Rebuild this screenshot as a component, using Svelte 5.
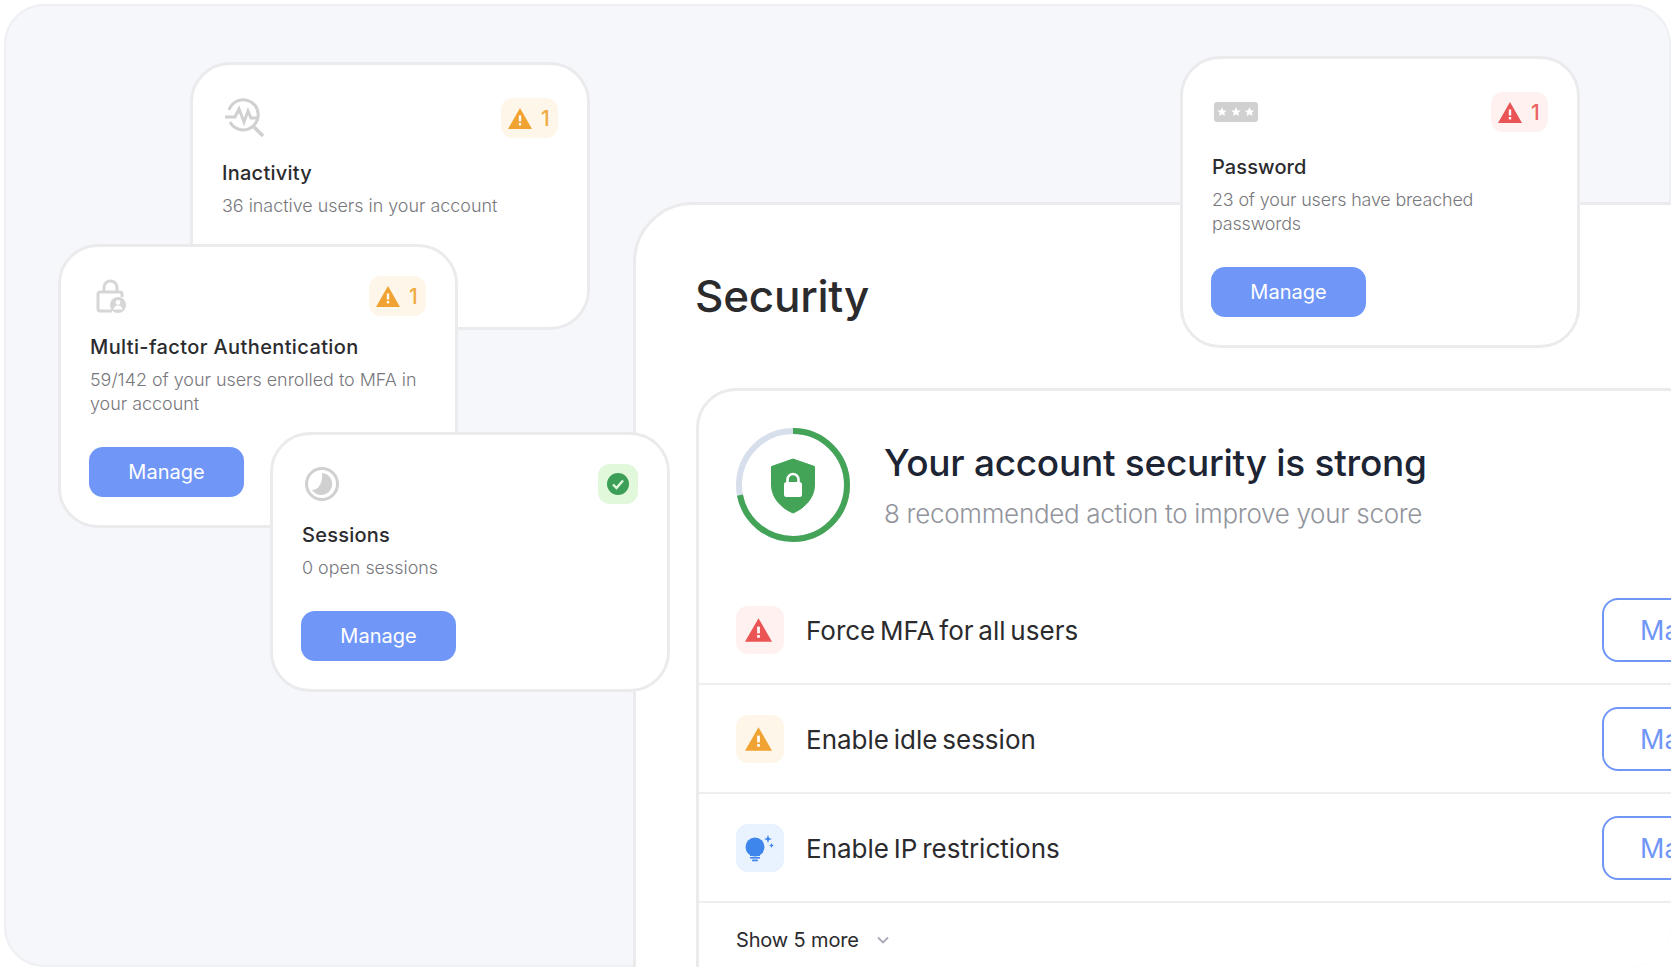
<script>
  const rows = [
    { label: "Force MFA for all users", tone: "red" },
    { label: "Enable idle session", tone: "orange" },
    { label: "Enable IP restrictions", tone: "blue" }
  ]
  const stars = [8, 22, 35.5]
</script>

{#snippet triangle()}
  <svg class="tri" viewBox="0 0 24 21">
    <path d="M12 0 24 21H0Z" fill="currentColor" />
    <rect x="10.8" y="7.5" width="2.4" height="6" fill="#fff" />
    <rect x="10.8" y="15" width="2.4" height="2.4" fill="#fff" />
  </svg>
{/snippet}

{#snippet manage()}
  <button class="primary">Manage</button>
{/snippet}

<div class="frame">
  <section class="panel">
    <h1>Security</h1>
    <div class="score">
      <div class="score-head">
        <svg class="ring" viewBox="0 0 114 114">
          <circle cx="57" cy="58" r="54" fill="none" stroke="#d6dfeb" stroke-width="6" />
          <circle cx="57" cy="58" r="54" fill="none" stroke="#43a356" stroke-width="6" pathLength="100" stroke-dasharray="72 28" transform="rotate(-90 57 58)" />
          <path d="M57 32 78.500 39.500V58C78.500 72 67 82 57 86 47 82 35.500 72 35.500 58V39.500Z" fill="#43a356" stroke="#43a356" stroke-width="1" stroke-linejoin="round" />
          <path d="M51.500 56V52.500A5.500 5.500 0 0 1 62.500 52.500V56" fill="none" stroke="#fff" stroke-width="2.600" />
          <rect x="48" y="55" width="18" height="15" rx="2.500" fill="#fff" />
        </svg>
        <div class="score-text">
          <h2>Your account security is strong</h2>
          <p>8 recommended action to improve your score</p>
        </div>
      </div>
      {#each rows as row}
        <div class="row">
          <span class="tile {row.tone}">
            {#if row.tone === "blue"}
              <svg class="bulb" viewBox="0 0 30 30">
                <circle cx="10" cy="15" r="9.500" fill="currentColor" />
                <path d="M5 21H15V24H5Z" fill="currentColor" />
                <rect x="5" y="25" width="10" height="1.600" fill="currentColor" />
                <rect x="7" y="27.500" width="6" height="1.800" rx="0.900" fill="currentColor" />
                <path d="M23 3 24.100 6 27 7 24.100 8 23 11 21.900 8 19 7 21.900 6Z" fill="currentColor" />
                <path d="M26.500 11 27.300 12.700 29 13.500 27.300 14.300 26.500 16 25.700 14.300 24 13.500 25.700 12.700Z" fill="currentColor" />
              </svg>
            {:else}
              {@render triangle()}
            {/if}
          </span>
          <span class="row-label">{row.label}</span>
          <button class="outline">Manage</button>
        </div>
      {/each}
      <div class="more">
        Show 5 more
        <svg viewBox="0 0 12 8"><path d="M1 1.500 6 6.500 11 1.500" fill="none" stroke="currentColor" stroke-width="1.800" /></svg>
      </div>
    </div>
  </section>

  <article class="card inactivity">
    <div class="card-head">
      <svg class="glyph shifted" viewBox="0 0 40 40">
        <path d="M4 12A15 15 0 1 1 5 24" fill="none" stroke="#d0d0d0" stroke-width="3" />
        <path d="M29 29 38 38" stroke="#d0d0d0" stroke-width="3.500" />
        <path d="M0 19H10L14 11 19 24 23 13 26 20H32" fill="none" stroke="#d0d0d0" stroke-width="3" />
      </svg>
      <span class="badge orange">{@render triangle()}<b>1</b></span>
    </div>
    <h3>Inactivity</h3>
    <p>36 inactive users in your account</p>
  </article>

  <article class="card mfa">
    <div class="card-head">
      <svg class="glyph" viewBox="0 0 40 40">
        <path d="M14 16V11.500A6.500 6.500 0 0 1 27 11.500V16" fill="none" stroke="#d6d6d6" stroke-width="3" />
        <path d="M22 35H10Q8 35 8 33V18Q8 16 10 16H30Q32 16 32 18V21" fill="none" stroke="#d6d6d6" stroke-width="3" />
        <circle cx="28" cy="29" r="8" fill="#d6d6d6" />
        <circle cx="28" cy="26.500" r="2.400" fill="#fff" />
        <path d="M23.500 33.500A4.500 4 0 0 1 32.500 33.500Z" fill="#fff" />
      </svg>
      <span class="badge orange">{@render triangle()}<b>1</b></span>
    </div>
    <h3>Multi-factor Authentication</h3>
    <p>59/142 of your users enrolled to MFA in your account</p>
    {@render manage()}
  </article>

  <article class="card sessions">
    <div class="card-head">
      <svg class="glyph" viewBox="0 0 40 40">
        <circle cx="20" cy="20" r="15.500" fill="none" stroke="#d0d0d0" stroke-width="3" />
        <path d="M20 9A11 11 0 1 1 10 26C16 26 21 20 20 9Z" fill="#d0d0d0" />
      </svg>
      <span class="badge green">
        <svg class="check" viewBox="0 0 22 22">
          <circle cx="11" cy="11" r="11" fill="#3d9f57" />
          <path d="M6 11.500 9.500 15 16 7.500" fill="none" stroke="#e1f8db" stroke-width="2.400" />
        </svg>
      </span>
    </div>
    <h3>Sessions</h3>
    <p>0 open sessions</p>
    {@render manage()}
  </article>

  <article class="card password">
    <div class="card-head">
      <svg class="stars" viewBox="0 0 44 20">
        <rect width="44" height="20" rx="3" fill="#d0d0d0" />
        {#each stars as x}
          <path d="M0-5 1.400-1.600 4.800-1.500 2.200 .7 3 4 0 2.200-3 4-2.200 .7-4.800-1.500-1.400-1.600Z" fill="#fff" transform="translate({x} 10)" />
        {/each}
      </svg>
      <span class="badge red">{@render triangle()}<b>1</b></span>
    </div>
    <h3>Password</h3>
    <p>23 of your users have breached<br />passwords</p>
    {@render manage()}
  </article>
</div>

<style>
  :global(body) {
    background: #fff;
  }
  .frame {
    position: relative;
    width: 1667px;
    height: 963px;
    margin: 4px 0 0 4px;
    overflow: hidden;
    border-radius: 40px;
    background: #f6f7fb;
    box-shadow: inset 0 0 0 2px #eef0f4;
    font-family: Inter, "Liberation Sans", sans-serif;
    color: #2b2b2e;
  }

  .panel {
    position: absolute;
    left: 629px;
    top: 198px;
    width: 1262px;
    box-sizing: border-box;
    padding: 63px 60px 0;
    background: #fff;
    border: 3px solid #ebebee;
    border-radius: 60px 0 0 0;
  }
  h1 {
    margin: 0 0 64px -1px;
    font-size: 44px;
    line-height: 56px;
    font-weight: 500;
    letter-spacing: -0.25px;
  }
  .score {
    border: 3px solid #ebebee;
    border-radius: 40px 0 0 0;
  }
  .score-head {
    display: flex;
    align-items: center;
    gap: 34px;
    padding: 36px 37px 35px;
  }
  .score-text {
    margin-top: 4px;
  }
  .ring {
    width: 114px;
    height: 114px;
    flex: none;
    overflow: visible;
  }
  h2 {
    margin: 0;
    font-size: 37px;
    line-height: 46px;
    font-weight: 500;
    letter-spacing: -0.27px;
    color: #1d2433;
  }
  .score-head p {
    margin: 10px 0 0;
    font-size: 26px;
    line-height: 36px;
    font-weight: 300;
    letter-spacing: -0.3px;
    color: #92949c;
  }
  .row {
    display: flex;
    align-items: center;
    gap: 22px;
    height: 109px;
    box-sizing: border-box;
    padding: 0 37px;
    border-bottom: 2px solid #eeeef1;
  }
  .tile {
    display: flex;
    align-items: center;
    justify-content: center;
    width: 48px;
    height: 48px;
    border-radius: 12px;
  }
  .tile .tri {
    width: 27px;
    height: 24px;
    margin-right: 3px;
  }
  .bulb {
    width: 30px;
    height: 30px;
    margin-top: -2px;
  }
  .row-label {
    flex: 1;
    padding-top: 2px;
    font-size: 26px;
    font-weight: 400;
    word-spacing: -2.500px;
  }
  .outline {
    width: 190px;
    height: 64px;
    padding: 2px 0 0 36px;
    text-align: left;
    font: inherit;
    font-size: 27px;
    color: #7096f8;
    background: #fff;
    border: 2px solid #7096f8;
    border-radius: 16px;
  }
  .more {
    display: flex;
    align-items: center;
    gap: 18px;
    height: 74px;
    padding-left: 37px;
    font-size: 20px;
    letter-spacing: -0.15px;
  }
  .more svg {
    width: 12px;
    height: 8px;
    color: #a9a9b8;
  }

  .card {
    position: absolute;
    box-sizing: border-box;
    background: #fff;
    border: 3px solid #ebebee;
    border-radius: 40px;
    padding: 29px 29px 0;
  }
  .inactivity {
    left: 186px;
    top: 58px;
    width: 400px;
    height: 268px;
    padding-top: 33px;
  }
  .mfa {
    left: 54px;
    top: 240px;
    width: 400px;
    height: 284px;
  }
  .mfa h3 {
    letter-spacing: 0.38px;
  }
  .sessions {
    left: 266px;
    top: 428px;
    width: 400px;
    height: 260px;
  }
  .password {
    left: 1176px;
    top: 52px;
    width: 400px;
    height: 292px;
    padding-top: 33px;
  }
  .password h3 {
    letter-spacing: 0.1px;
  }
  .card-head {
    display: flex;
    justify-content: space-between;
    align-items: flex-start;
    height: 40px;
    margin-bottom: 18px;
  }
  .inactivity .card-head,
  .password .card-head {
    margin-bottom: 22px;
  }
  .glyph {
    width: 40px;
    height: 40px;
  }
  .shifted {
    margin-left: 3px;
  }
  .stars {
    width: 44px;
    height: 20px;
    margin: 10px 0 0 2px;
  }
  .badge {
    display: flex;
    align-items: center;
    justify-content: flex-start;
    gap: 9px;
    height: 40px;
    width: 57px;
    padding-left: 7px;
    box-sizing: border-box;
    border-radius: 12px;
  }
  .badge .tri {
    width: 24px;
    height: 21px;
  }
  .badge b {
    font-size: 21px;
    font-weight: 500;
    opacity: 0.9;
  }
  .badge.green {
    width: 40px;
    padding: 0;
    justify-content: center;
    background: #e1f8db;
  }
  .check {
    width: 22px;
    height: 22px;
  }
  .orange {
    background: #fff6ea;
    color: #f0a332;
  }
  .red {
    background: #fff1f0;
    color: #ea5455;
  }
  .blue {
    background: #e9f2ff;
    color: #3f86ec;
  }
  h3 {
    margin: 0;
    font-size: 20px;
    line-height: 26px;
    font-weight: 500;
    letter-spacing: 0.25px;
  }
  .card p {
    margin: 8px 0 0;
    font-size: 17.9px;
    line-height: 23.500px;
    font-weight: 300;
    color: #77777c;
  }
  .password p {
    letter-spacing: -0.15px;
  }
  .primary {
    display: block;
    width: 155px;
    height: 50px;
    margin: 31.500px 0 0 -1px;
    padding: 0;
    font: inherit;
    font-size: 20px;
    color: #fff;
    background: #7096f8;
    border: 0;
    border-radius: 14px;
  }
</style>
